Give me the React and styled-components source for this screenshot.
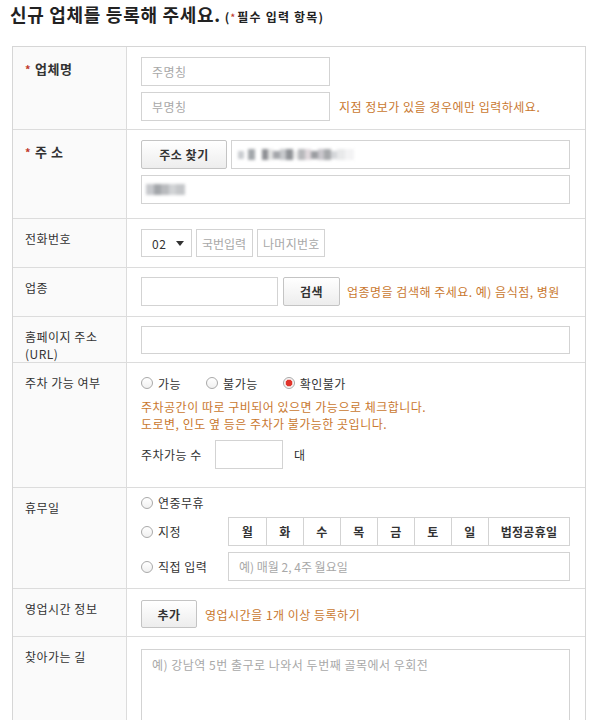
import React from "react";
import styled, { createGlobalStyle } from "styled-components";

const GlobalStyle = createGlobalStyle`
  body {
    margin: 0;
    background: #ffffff;
    font-family: "Noto Sans CJK KR", "Noto Sans", sans-serif;
    font-size: 12px;
    color: #333333;
    letter-spacing: 0.5px;
  }
  * {
    box-sizing: border-box;
  }
`;

const Page = styled.div`
  width: 600px;
  padding: 2px 14px 0 10px;
`;

const Title = styled.h1`
  margin: 0;
  font-size: 18px;
  line-height: 24px;
  font-weight: 700;
  color: #222222;
  letter-spacing: 0.7px;
  display: flex;
  align-items: baseline;
  gap: 4px;
`;

const TitleNote = styled.span`
  font-size: 12px;
  font-weight: 700;
  color: #222222;
  letter-spacing: 1.2px;
`;

const Star = styled.span`
  color: #c0392b;
  font-size: ${(p) => (p.$small ? "9px" : "11px")};
  margin-right: ${(p) => (p.$small ? "1px" : "4px")};
  vertical-align: ${(p) => (p.$small ? "1px" : "0")};
`;

const FormTable = styled.div`
  margin: 16px 0 0 2px;
  width: 574px;
  border: 1px solid #d6d6d6;
`;

const Row = styled.div`
  display: grid;
  grid-template-columns: 114px 1fr;

  & + & {
    border-top: 1px solid #dcdcdc;
  }
`;

const Label = styled.div`
  background: #fafafa;
  border-right: 1px solid #dcdcdc;
  padding: ${(p) => (p.$req ? "13px" : "11px")} 0 0 12px;
  font-size: ${(p) => (p.$req ? "13px" : "12px")};
  font-weight: ${(p) => (p.$req ? 700 : 400)};
  line-height: 17px;
  color: #333333;
`;

const Cell = styled.div`
  padding: ${(p) => p.$pad || "10px 15px 10px 14px"};
  display: flex;
  flex-direction: column;
  gap: ${(p) => p.$gap || "6px"};
`;

const Line = styled.div`
  display: flex;
  align-items: center;
  gap: ${(p) => p.$gap || "4px"};
`;

const Input = styled.input`
  height: ${(p) => p.$h || "29px"};
  width: ${(p) => p.$w || "100%"};
  flex: ${(p) => (p.$w ? "none" : "1")};
  border: 1px solid #d3d3d3;
  padding: 0 ${(p) => p.$px || "10px"};
  font-family: inherit;
  font-size: 12px;
  letter-spacing: ${(p) => p.$ls || "0.5px"};
  color: #333333;
  background: #ffffff;
  outline: none;

  &::placeholder {
    color: #a8a8a8;
  }
`;

const AddrBox = styled.div`
  height: 29px;
  flex: ${(p) => (p.$grow ? "1" : "none")};
  border: 1px solid #d3d3d3;
  background: #ffffff;
  display: flex;
  align-items: center;
  padding-left: ${(p) => p.$pl || "6px"};
`;

const Blur = styled.div`
  display: flex;
  align-items: center;
  filter: blur(1.4px);
`;

const Pixel = styled.span`
  display: block;
  width: ${(p) => p.$w}px;
  height: ${(p) => p.$h || 10}px;
  background: ${(p) => p.$c};
`;

const Button = styled.button`
  height: ${(p) => p.$h || "29px"};
  width: ${(p) => p.$w};
  flex: none;
  border: 1px solid #c4c4c4;
  border-radius: 2px;
  background: linear-gradient(#ffffff, #ededed);
  font-family: inherit;
  font-size: 12px;
  font-weight: 700;
  letter-spacing: 0.5px;
  color: #333333;
  padding: 0;
  cursor: pointer;
`;

const Hint = styled.span`
  color: #c9782f;
  font-size: 12px;
  line-height: 17px;
  margin-left: ${(p) => p.$ml || "0"};
`;

const HintBlock = styled.div`
  display: flex;
  flex-direction: column;
  margin: ${(p) => p.$m || "0"};
`;

const SelectBox = styled.div`
  width: 51px;
  height: 28px;
  flex: none;
  border: 1px solid #d3d3d3;
  display: flex;
  align-items: center;
  padding-left: 10px;
  gap: 10px;
  font-size: 12px;
  color: #333333;
`;

const Caret = styled.span`
  width: 0;
  height: 0;
  border-left: 4px solid transparent;
  border-right: 4px solid transparent;
  border-top: 5px solid #333333;
`;

const RadioGroup = styled.div`
  display: flex;
  align-items: center;
  gap: 25px;
  height: 16px;
  margin-top: 1px;
`;

const RadioItem = styled.label`
  display: flex;
  align-items: center;
  gap: 5px;
  width: ${(p) => p.$w || "auto"};
  flex: none;
  color: #333333;
  font-size: 12px;
`;

const RadioDot = styled.span`
  width: 12px;
  height: 12px;
  border-radius: 50%;
  border: 1px solid #a9a9a9;
  background: ${(p) =>
    p.$on
      ? "radial-gradient(circle, #e0342b 0 3px, #f3c4c1 3.5px, #fafafa 4.5px)"
      : "linear-gradient(#ffffff, #f0f0f0)"};
  flex: none;
`;

const ParkLine = styled.div`
  display: flex;
  align-items: center;
  margin-top: 8px;
  color: #333333;
`;

const ParkLabel = styled.span`
  width: 74px;
`;

const Unit = styled.span`
  margin-left: 11px;
`;

const DayGrid = styled.div`
  flex: 1;
  height: 29px;
  display: grid;
  grid-template-columns: repeat(7, 37px) 1fr;
  border: 1px solid #d3d3d3;
`;

const DayCell = styled.div`
  display: flex;
  align-items: center;
  justify-content: center;
  font-weight: 700;
  font-size: 12px;
  color: #333333;
  letter-spacing: 0.3px;

  & + & {
    border-left: 1px solid #d3d3d3;
  }
`;

const TextArea = styled.textarea`
  width: 100%;
  height: 110px;
  border: 1px solid #d3d3d3;
  padding: 6px 10px;
  font-family: inherit;
  font-size: 12px;
  letter-spacing: 0.5px;
  resize: none;
  outline: none;

  &::placeholder {
    color: #a8a8a8;
  }
`;

const addrPixels = [
  [6, "#c9ccd0"], [4, "#ffffff"], [7, "#a3a7ab"], [7, "#ffffff"],
  [6, "#8e9094"], [5, "#e4e4e4"], [7, "#a4a6aa"], [6, "#c7c9cc"],
  [7, "#8f9296"], [5, "#eeeeee"], [7, "#b7b8bb"], [6, "#dfd8dc"],
  [7, "#9b9da1"], [6, "#c9c7cc"], [7, "#a6a8ab"], [6, "#d4d6d9"],
  [8, "#e8e9ea"], [9, "#f3f3f4"],
];

const addr2Pixels = [
  [8, "#c6c8cc"], [7, "#a3a6aa"], [8, "#b9bbbe"], [7, "#d1d3d5"], [9, "#c4c6c9"],
];

const days = ["월", "화", "수", "목", "금", "토", "일", "법정공휴일"];

function Radio({ on, children, w }) {
  return (
    <RadioItem $w={w}>
      <RadioDot $on={on} />
      {children}
    </RadioItem>
  );
}

function App() {
  return (
    <Page>
      <GlobalStyle />
      <Title>
        신규 업체를 등록해 주세요.
        <TitleNote>
          (<Star $small>*</Star>필수 입력 항목)
        </TitleNote>
      </Title>

      <FormTable>
        <Row>
          <Label $req>
            <Star>*</Star>업체명
          </Label>
          <Cell $pad="10px 15px 8px 14px">
            <Input $w="189px" placeholder="주명칭" />
            <Line $gap="9px">
              <Input $w="189px" placeholder="부명칭" />
              <Hint>지점 정보가 있을 경우에만 입력하세요.</Hint>
            </Line>
          </Cell>
        </Row>

        <Row>
          <Label $req>
            <Star>*</Star>주 소
          </Label>
          <Cell $pad="10px 15px 14px 14px">
            <Line $gap="4px">
              <Button $w="86px">주소 찾기</Button>
              <AddrBox $grow>
                <Blur>
                  {addrPixels.map(([w, c], i) => (
                    <Pixel key={i} $w={w} $c={c} $h={i % 3 === 0 ? 8 : 11} />
                  ))}
                </Blur>
              </AddrBox>
            </Line>
            <AddrBox $pl="4px">
              <Blur>
                {addr2Pixels.map(([w, c], i) => (
                  <Pixel key={i} $w={w} $c={c} $h={11} />
                ))}
              </Blur>
            </AddrBox>
          </Cell>
        </Row>

        <Row>
          <Label>전화번호</Label>
          <Cell $pad="10px 15px 10px 14px">
            <Line $gap="4px">
              <SelectBox>
                02 <Caret />
              </SelectBox>
              <Input $w="57px" $h="28px" $px="5px" $ls="0" placeholder="국번입력" />
              <Input $w="68px" $h="28px" $px="5px" $ls="0.3px" placeholder="나머지번호" />
            </Line>
          </Cell>
        </Row>

        <Row>
          <Label>업종</Label>
          <Cell $pad="9px 15px 10px 14px">
            <Line $gap="5px">
              <Input $w="137px" />
              <Button $w="57px">검색</Button>
              <Hint $ml="2px">업종명을 검색해 주세요. 예) 음식점, 병원</Hint>
            </Line>
          </Cell>
        </Row>

        <Row>
          <Label>
            홈페이지 주소
            <br />
            (URL)
          </Label>
          <Cell $pad="9px 15px 8px 14px">
            <Input />
          </Cell>
        </Row>

        <Row>
          <Label>주차 가능 여부</Label>
          <Cell $pad="11px 15px 18px 14px" $gap="0">
            <RadioGroup>
              <Radio>가능</Radio>
              <Radio>불가능</Radio>
              <Radio on>확인불가</Radio>
            </RadioGroup>
            <HintBlock $m="7px 0 0 0">
              <Hint>주차공간이 따로 구비되어 있으면 가능으로 체크합니다.</Hint>
              <Hint>도로변, 인도 옆 등은 주차가 불가능한 곳입니다.</Hint>
            </HintBlock>
            <ParkLine>
              <ParkLabel>주차가능 수</ParkLabel>
              <Input $w="68px" />
              <Unit>대</Unit>
            </ParkLine>
          </Cell>
        </Row>

        <Row>
          <Label>휴무일</Label>
          <Cell $pad="6px 15px 7px 14px" $gap="6px">
            <Line>
              <Radio>연중무휴</Radio>
            </Line>
            <Line $gap="0">
              <Radio w="87px">지정</Radio>
              <DayGrid>
                {days.map((d) => (
                  <DayCell key={d}>{d}</DayCell>
                ))}
              </DayGrid>
            </Line>
            <Line $gap="0">
              <Radio w="87px">직접 입력</Radio>
              <Input $ls="0" placeholder="예) 매월 2, 4주 월요일" />
            </Line>
          </Cell>
        </Row>

        <Row>
          <Label>영업시간 정보</Label>
          <Cell $pad="11px 15px 8px 14px">
            <Line $gap="8px">
              <Button $w="56px" $h="28px">
                추가
              </Button>
              <Hint>영업시간을 1개 이상 등록하기</Hint>
            </Line>
          </Cell>
        </Row>

        <Row>
          <Label>찾아가는 길</Label>
          <Cell $pad="12px 15px 12px 14px">
            <TextArea placeholder="예) 강남역 5번 출구로 나와서 두번째 골목에서 우회전" />
          </Cell>
        </Row>
      </FormTable>
    </Page>
  );
}

export default App;
